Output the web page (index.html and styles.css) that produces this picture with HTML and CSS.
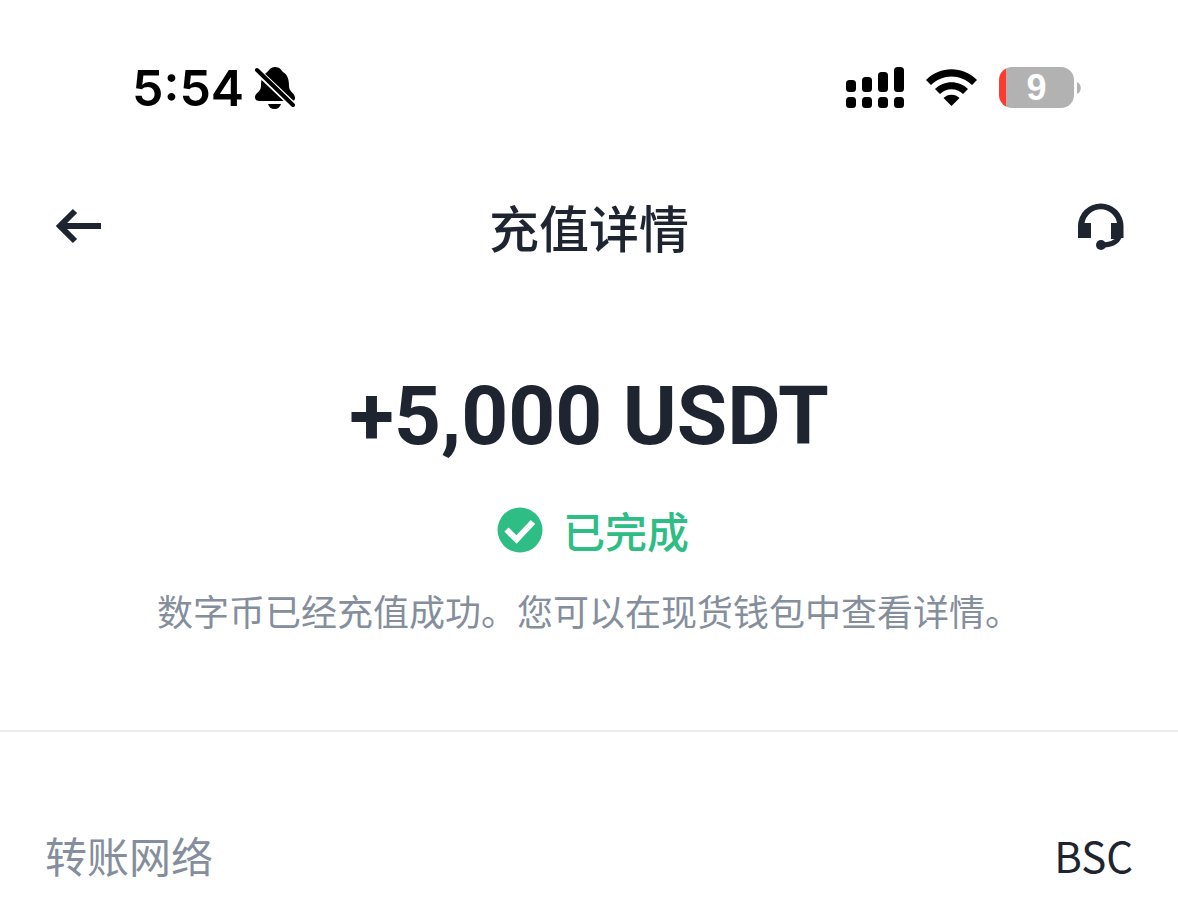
FILE: index.html
```
<!DOCTYPE html>
<html lang="zh-CN">
<head>
    <meta charset="UTF-8">
    <meta name="viewport" content="width=device-width, initial-scale=1.0">
    <title>充值详情</title>
    <link rel="stylesheet" href="styles.css">
</head>
<body>
    <div class="status-bar">
        <div class="clock">
            <span>5:54</span>
            <svg width="42" height="44" viewBox="0 0 42 44" aria-hidden="true">
                <path d="M11 7C14 5 15 1 20 1s6 3 8 5c5 3 6 8 6 14 0 6 6 7 6 12 0 2-1 3-3 3H5c-3 0-5-1-5-4 0-4 6-5 6-11 0-6 1-10 5-13z"/>
                <path d="M13 38h13c-1 3-3 5-6.500 5S14 41 13 38z"/>
                <path d="M0 3l40 38" stroke="#fff" stroke-width="7"/>
                <path d="M2 4l36 35" stroke="#000" stroke-width="4" stroke-linecap="round"/>
            </svg>
        </div>
        <div class="indicators">
            <svg width="58" height="42" viewBox="0 0 58 42" aria-hidden="true">
                <rect x="0" y="13" width="10" height="12" rx="3.500"/>
                <rect x="16" y="10" width="10" height="15" rx="3.500"/>
                <rect x="32" y="5" width="10" height="20" rx="3.500"/>
                <rect x="48" y="0" width="10" height="25" rx="3.500"/>
                <rect x="0" y="30" width="10" height="11" rx="3.500"/>
                <rect x="16" y="30" width="10" height="11" rx="3.500"/>
                <rect x="32" y="30" width="10" height="11" rx="3.500"/>
                <rect x="48" y="30" width="10" height="11" rx="3.500"/>
            </svg>
            <svg width="51" height="42" viewBox="0 0 51 42" aria-hidden="true">
                <path d="M0 13C14-1.500 37-1.500 51 13l-5 5C34 6.500 17 6.500 5 18z"/>
                <path d="M9 22c9-9 24-9 33 0l-5 5c-6-6.500-17-6.500-23 0z"/>
                <path d="M17.500 31c4-4.500 12-4.500 16 0l-8 8z"/>
            </svg>
            <div class="battery">
                <span class="battery-body">9</span>
                <svg width="4" height="12" viewBox="0 0 4 12" aria-hidden="true">
                    <path d="M0 0c5 2 5 10 0 12z" fill="#b2b2b2"/>
                </svg>
            </div>
        </div>
    </div>

    <header class="nav">
        <button class="icon-btn" type="button" aria-label="返回">
            <svg width="48" height="48" viewBox="0 0 48 48" fill="none" stroke="#1e2530" stroke-width="6">
                <path d="M48 24H8M22 9L7 24l15 15"/>
            </svg>
        </button>
        <h1>充值详情</h1>
        <button class="icon-btn" type="button" aria-label="客服">
            <svg width="48" height="48" viewBox="0 0 48 48" fill="#1e2530">
                <path d="M1 36V24a22.750 22.500 0 0 1 45.500 0v12H43l-3 1h-6V21h6a16.500 16.500 0 0 0-32.500 0H14v15z"/>
                <path d="M42 35c-2 5-8 8-18 8" fill="none" stroke="#1e2530" stroke-width="5"/>
                <circle cx="24" cy="43" r="5"/>
            </svg>
        </button>
    </header>

    <main>
        <section class="summary">
            <p class="amount">+5,000 USDT</p>
            <p class="state">
                <svg width="46" height="46" viewBox="0 0 46 46" aria-hidden="true">
                    <circle cx="23" cy="23" r="22.500" fill="#2ebd85"/>
                    <path d="M9.500 22.500l10 10L36 15" fill="none" stroke="#fff" stroke-width="6"/>
                </svg>
                <span>已完成</span>
            </p>
            <p class="note">数字币已经充值成功。您可以在现货钱包中查看详情。</p>
        </section>
        <dl class="details">
            <div class="row">
                <dt>转账网络</dt>
                <dd>BSC</dd>
            </div>
        </dl>
    </main>
</body>
</html>
```
FILE: styles.css
```
* {
    box-sizing: border-box;
}
body {
    margin: 0;
    background-color: #fff;
    color: #1e2530;
    font-family: "Noto Sans CJK SC", sans-serif;
}
h1,
p,
dl,
dd {
    margin: 0;
}
svg {
    display: block;
}

/* phone status bar */
.status-bar {
    display: flex;
    justify-content: space-between;
    align-items: center;
    height: 175px;
    padding: 0 97px 0 132px;
    color: #000;
}
.clock {
    display: flex;
    align-items: center;
    gap: 11px;
    font-family: Inter, sans-serif;
    font-size: 50px;
    font-weight: 600;
}
.indicators {
    display: flex;
    align-items: center;
    gap: 22px;
}
.battery {
    display: flex;
    align-items: center;
    gap: 3px;
}
.battery-body {
    width: 75px;
    border-radius: 13px;
    background: linear-gradient(to right, #ff3b30 7px, #b2b2b2 7px);
    color: #fff;
    font-family: "Liberation Sans", sans-serif;
    font-size: 36px;
    font-weight: 700;
    line-height: 41px;
    text-align: center;
}

/* title bar */
.nav {
    display: flex;
    justify-content: space-between;
    align-items: center;
    height: 102px;
    padding: 0 53px;
}
.nav h1 {
    font-size: 50px;
    font-weight: 500;
    line-height: 70px;
}
.icon-btn {
    padding: 0;
    border: none;
    background: none;
    cursor: pointer;
}

/* amount and state */
.summary {
    padding: 91px 32px 94px;
    border-bottom: 2px solid #eaecef;
    text-align: center;
}
.amount {
    font-family: Roboto, sans-serif;
    font-size: 82px;
    font-weight: 700;
    line-height: 96px;
}
.state {
    display: flex;
    justify-content: center;
    align-items: center;
    gap: 20px;
    margin: 36px 0 24px;
    padding-left: 8px;
    color: #2ebd85;
    font-size: 42px;
    font-weight: 500;
    line-height: 60px;
}
.note {
    color: #848e9c;
    font-size: 36px;
    line-height: 52px;
}

.details {
    padding: 90px 45px 12px;
}
.row {
    display: flex;
    justify-content: space-between;
    font-size: 42px;
    line-height: 66px;
}
.row dt {
    color: #848e9c;
}
```
